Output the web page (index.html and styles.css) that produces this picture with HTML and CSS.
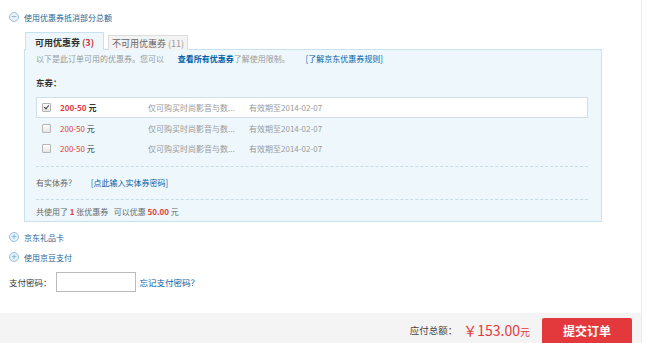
FILE: index.html
```html
<!DOCTYPE html>
<html>
<head>
  <title>使用优惠券</title>
  <link rel="stylesheet" href="styles.css">
</head>
<body>
<div class="page">
  <!-- coupon section -->
  <div class="toggle open">
    <span class="circle">&minus;</span>使用优惠券抵消部分总额
  </div>

  <div class="coupons">
    <div class="tabs">
      <span class="tab active">可用优惠券 <em>(3)</em></span>
      <span class="tab">不可用优惠券 <em>(11)</em></span>
    </div>
    <div class="panel">
      <p class="tip">以下是此订单可用的优惠券。您可以 <a class="strong-link" href="#">查看所有优惠券</a>了解使用限制。 <a class="rule-link" href="#">[了解京东优惠券规则]</a></p>
      <p class="group-title">东券：</p>

      <div class="coupon-list">
        <div class="coupon selected">
          <span class="check on"></span>
          <span class="amount"><b>200-50</b> 元</span>
          <span class="limit">仅可购买时尚影音与数...</span>
          <span class="date">有效期至2014-02-07</span>
        </div>
        <div class="coupon">
          <span class="check"></span>
          <span class="amount"><b>200-50</b> 元</span>
          <span class="limit">仅可购买时尚影音与数...</span>
          <span class="date">有效期至2014-02-07</span>
        </div>
        <div class="coupon">
          <span class="check"></span>
          <span class="amount"><b>200-50</b> 元</span>
          <span class="limit">仅可购买时尚影音与数...</span>
          <span class="date">有效期至2014-02-07</span>
        </div>
      </div>

      <div class="entity">有实体券？ <a class="rule-link" href="#">[点此输入实体券密码]</a></div>
      <div class="summary">共使用了 <b>1</b> 张优惠券 &nbsp; 可以优惠 <b>50.00</b> 元</div>
    </div>
  </div>

  <div class="toggle"><span class="circle">+</span>京东礼品卡</div>
  <div class="toggle"><span class="circle">+</span>使用京豆支付</div>

  <div class="password">
    <span>支付密码：</span>
    <input type="password">
    <a href="#">忘记支付密码？</a>
  </div>

  <!-- bottom bar -->
  <div class="footer">
    <span class="total-label">应付总额：</span>
    <span class="total">￥153.00<small>元</small></span>
    <button type="button" class="submit">提交订单</button>
  </div>
</div>
</body>
</html>
```

FILE: styles.css
```css
/* page */
body {
  margin: 0;
  font-family: "Noto Sans CJK SC", "Liberation Sans", sans-serif;
  font-size: 8px;
  color: #333;
  background: #fff;
  white-space: nowrap;
}

a {
  color: #005ea7;
  text-decoration: none;
}

.page {
  width: 641px;
  height: 343px;
  border-right: 1px solid #ececec;
  display: flex;
  flex-direction: column;
  overflow: hidden;
}

/* expand / collapse rows */
.toggle {
  display: flex;
  align-items: center;
  height: 20px;
  padding-left: 9px;
  color: #2a5f93;
  font-size: 8px;
}

.toggle.open {
  margin-top: 7px;
}

.circle {
  width: 8px;
  height: 8px;
  border: 1px solid #9dc0dc;
  border-radius: 50%;
  background: #e6f0f8;
  color: #6f9cc0;
  font-size: 9px;
  line-height: 8px;
  text-align: center;
  margin-right: 5px;
}

/* coupon box */
.coupons {
  margin: 6px 0 5px 24px;
  width: 578px;
}

.tabs {
  display: flex;
  align-items: flex-end;
  height: 17px;
  padding-left: 1px;
  position: relative;
  z-index: 1;
}

.tab {
  height: 14px;
  line-height: 15px;
  width: 78px;
  text-align: center;
  margin-right: 4px;
  border: 1px solid #dcdcdc;
  border-bottom: none;
  background: #f3f3f3;
  color: #666;
  font-size: 9px;
}

.tab em {
  font-style: normal;
  color: #999;
}

.tab.active {
  height: 17px;
  line-height: 19px;
  width: 77px;
  border-color: #c7e2ee;
  background: #eef8fc;
  font-weight: bold;
  color: #333;
}

.tab.active em {
  color: #c33;
}

.panel {
  border: 1px solid #c7e2ee;
  background: #eef8fc;
  padding: 3px 13px 0 11px;
  margin-top: -1px;
}

.panel p {
  margin: 0;
}

.tip {
  line-height: 12px;
  color: #999;
}

.strong-link {
  font-weight: bold;
  margin-left: 12px;
}

.rule-link {
  margin-left: 14px;
}

.group-title {
  font-weight: bold;
  font-size: 8.5px;
  line-height: 12px;
  margin-top: 11px !important;
}

.coupon-list {
  margin-top: 9px;
  padding-bottom: 8px;
  border-bottom: 1px dashed #c9dce6;
}

.coupon {
  display: flex;
  align-items: center;
  height: 20px;
  color: #999;
}

.coupon.selected {
  height: 19px;
  background: #fff;
  border: 1px solid #cfdfe8;
}

/* checkbox drawn in css */
.check {
  position: relative;
  box-sizing: border-box;
  width: 9px;
  height: 9px;
  margin: 0 9px 0 6px;
  border: 1px solid #b5b5b5;
  border-radius: 1px;
  background: linear-gradient(#fdfdfd, #e6e6e6);
}

.selected .check {
  margin-left: 5px;
}

.check.on::after {
  content: "";
  position: absolute;
  left: 2px;
  top: 0;
  width: 2px;
  height: 4px;
  border: solid #444;
  border-width: 0 1.5px 1.5px 0;
  transform: rotate(40deg);
}

.amount {
  width: 88px;
  color: #333;
}

.amount b {
  color: #e4393c;
  font-weight: normal;
}

.selected .amount,
.selected .amount b {
  font-weight: bold;
}

.limit {
  width: 101px;
}

.entity {
  height: 32px;
  line-height: 32px;
  color: #666;
  border-bottom: 1px dashed #c9dce6;
}

.entity .rule-link {
  margin-left: 13px;
}

.summary {
  height: 21px;
  line-height: 24px;
  color: #666;
}

.summary b {
  color: #e4393c;
}

/* password */
.password {
  display: flex;
  align-items: center;
  margin-top: 5px;
  padding-left: 9px;
  font-size: 8.5px;
}

.password input {
  box-sizing: border-box;
  width: 80px;
  height: 20px;
  border: 1px solid #bbb;
  margin: 0 4px 0 4px;
}

/* footer */
.footer {
  margin-top: auto;
  height: 30px;
  background: #f4f4f4;
  display: flex;
  align-items: flex-end;
  justify-content: flex-end;
  padding-right: 9px;
}

.total-label {
  font-size: 9.5px;
  color: #444;
  align-self: center;
  margin-top: 4px;
}

.total {
  color: #e4393c;
  font-size: 14px;
  align-self: center;
  margin: 3px 12px 0 6px;
}

.total small {
  font-size: 10px;
}

.submit {
  width: 90px;
  height: 25px;
  border: none;
  border-radius: 2px 2px 0 0;
  background: #e4393c;
  color: #fff;
  font-family: inherit;
  font-size: 12px;
  font-weight: bold;
  cursor: pointer;
}
```
